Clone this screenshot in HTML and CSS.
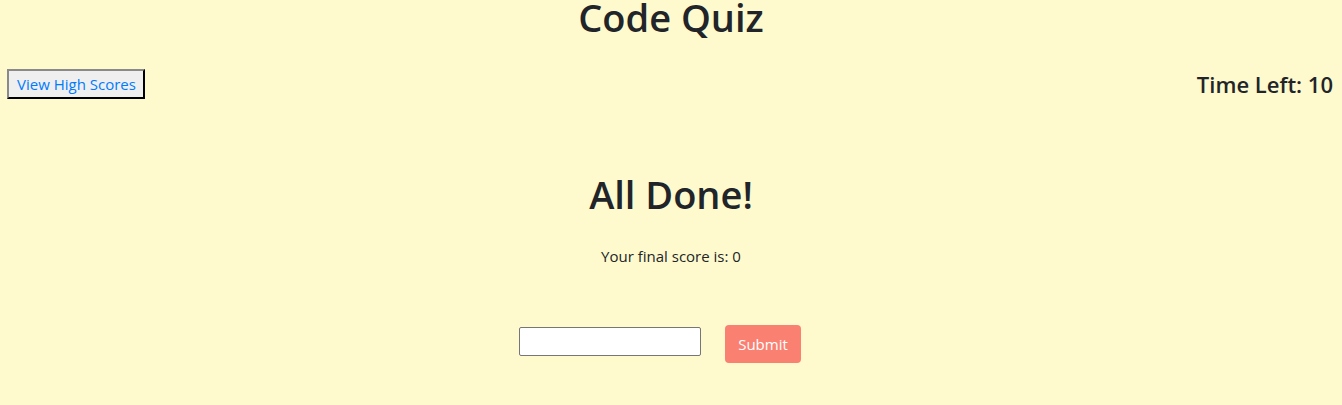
FILE: index.html
```html
<!DOCTYPE html>
<html lang="en">
<head>
<meta charset="utf-8">
<title>Code Quiz</title>
<link rel="stylesheet" href="styles.css">
</head>
<body>
<header class="site-header">
  <h1 class="title">Code Quiz</h1>
</header>
<nav class="topbar">
  <button class="scores-btn" type="button">View High Scores</button>
  <h4 class="timer">Time Left: 10</h4>
</nav>
<main class="done">
  <h2 class="done-title">All Done!</h2>
  <p class="final-score">Your final score is: 0</p>
  <form class="score-form">
    <input class="initials" type="text">
    <button class="submit-btn" type="button">Submit</button>
  </form>
</main>
</body>
</html>
```
FILE: styles.css
```css
html, body {
  margin: 0;
  padding: 0;
}
body {
  background: #fffacd;
  color: #212529;
  font-family: "Open Sans", "Noto Sans", sans-serif;
  font-size: 15px;
  height: 405px;
  overflow: hidden;
}
.site-header {
  display: flex;
  justify-content: center;
}
.title {
  margin: 0;
  font-size: 38px;
  font-weight: 600;
  line-height: 34px;
}
.topbar {
  display: flex;
  justify-content: space-between;
  align-items: center;
  padding: 35px 9px 0 7px;
}
.scores-btn {
  font-family: inherit;
  font-size: 15px;
  color: #007bff;
  background: #efefef;
  border: 2px outset #767676;
  border-color: #8a8a8a #2b2b2b #2b2b2b #8a8a8a;
  height: 30px;
  padding: 0 7px 0 8px;
  line-height: 26px;
}
.timer {
  margin: 0;
  font-size: 22px;
  font-weight: 600;
  line-height: 30px;
}
.done {
  display: flex;
  flex-direction: column;
  align-items: center;
  padding-top: 71px;
}
.done-title {
  margin: 0;
  font-size: 38px;
  font-weight: 600;
  line-height: 48px;
}
.final-score {
  margin: 26px 0 0 0;
  line-height: 24px;
}
.score-form {
  display: flex;
  align-items: flex-start;
  gap: 24px;
  margin-top: 57px;
  padding-right: 22px;
}
.initials {
  box-sizing: border-box;
  margin-top: 2px;
  border: 1px solid #767676;
  border-radius: 2px;
  background: #fff;
  height: 29px;
  width: 182px;
}
.submit-btn {
  font-family: inherit;
  font-size: 15px;
  color: #fff;
  background: #fa8072;
  border: none;
  border-radius: 4px;
  height: 38px;
  padding: 0 13px;
}
```
